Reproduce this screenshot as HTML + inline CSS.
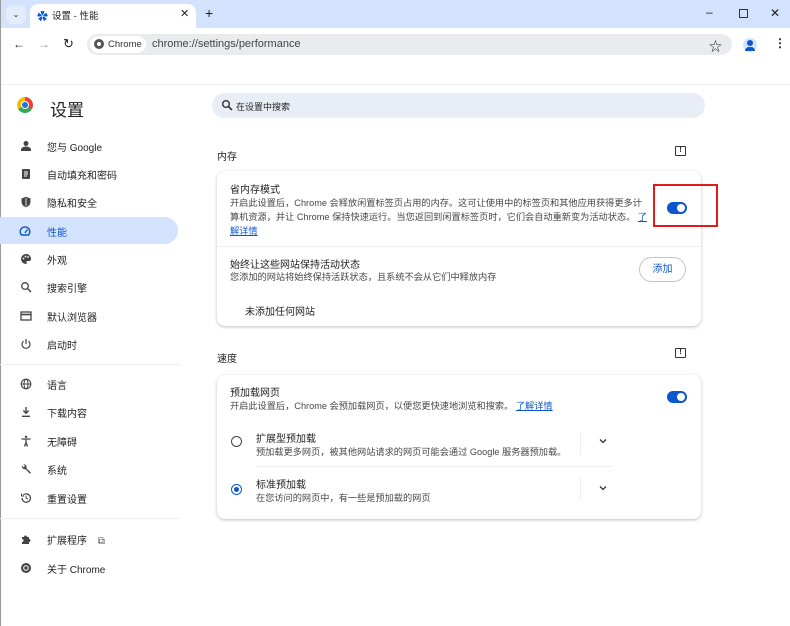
<!DOCTYPE html>
<html><head><meta charset="utf-8"><style>
*{margin:0;padding:0;box-sizing:border-box}
body{width:790px;height:626px;overflow:hidden;background:#fff;font-family:"Liberation Sans","Noto Sans CJK SC",sans-serif;color:#1f1f1f;position:relative;font-size:10px}
.a{position:absolute;white-space:nowrap}
.t{font-size:10px;color:#1f1f1f}
.d{font-size:9.2px;color:#474747}
.lnk{color:#0b57d0;text-decoration:underline}
.nav{font-size:10px;color:#1f1f1f}
.tog{position:absolute;width:20px;height:12px;border-radius:6px;background:#0b57d0}
.tog:after{content:"";position:absolute;right:2px;top:2px;width:8px;height:8px;border-radius:50%;background:#fff}
svg.i{position:absolute;width:12px;height:12px}
</style></head><body>
<div class="a" style="left:0;top:0;width:790px;height:28px;background:#d3e3fd"></div>
<div class="a" style="left:6px;top:5px;width:20px;height:19px;border-radius:6px;background:#e4ecfb;font-size:8px;text-align:center;line-height:19px">⌄</div>
<div class="a" style="left:30px;top:4px;width:166px;height:24px;background:#fff;border-radius:8px 8px 0 0"></div>
<div class="a" style="left:37px;top:8px;color:#0b57d0;font-size:11px">✿</div>
<div class="a" style="left:52px;top:8px;font-size:9.5px">设置 - 性能</div>
<div class="a" style="left:180px;top:7px;font-size:11px">✕</div>
<div class="a" style="left:205px;top:5px;font-size:14px">+</div>
<div class="a" style="left:706px;top:5px;font-size:12px">–</div>
<div class="a" style="left:739px;top:9px;width:9px;height:9px;border:1.3px solid #333"></div>
<div class="a" style="left:770px;top:6px;font-size:12px">✕</div>
<div class="a" style="left:13px;top:37px;font-size:12px">←</div>
<div class="a" style="left:38px;top:37px;font-size:12px;color:#999">→</div>
<div class="a" style="left:63px;top:36px;font-size:13px">↻</div>
<div class="a" style="left:87px;top:34px;width:645px;height:21px;border-radius:11px;background:#e9ebee"></div>
<div class="a" style="left:90px;top:36px;width:56px;height:17px;border-radius:9px;background:#fff"></div>
<div class="a" style="left:94px;top:39px;width:10px;height:10px;border-radius:50%;border:3px solid #555"></div>
<div class="a" style="left:108px;top:39px;font-size:9.5px;color:#333">Chrome</div>
<div class="a" style="left:152px;top:38px;font-size:11px;color:#444">chrome://settings/performance</div>
<div class="a" style="left:709px;top:36px;font-size:13px">☆</div>
<div class="a" style="left:743px;top:38px;width:14px;height:14px;border-radius:50%;background:#d3e3fd"></div>
<div class="a" style="left:747px;top:40px;width:6px;height:6px;border-radius:50%;background:#0b57d0"></div>
<div class="a" style="left:745px;top:47px;width:10px;height:4px;border-radius:4px 4px 0 0;background:#0b57d0"></div>
<div class="a" style="left:774px;top:36px;font-size:12px;font-weight:bold">⋮</div>
<div class="a" style="left:0;top:84px;width:790px;height:1px;background:#eee"></div>
<div class="a" style="left:0;top:0;width:1px;height:626px;background:#999"></div>
<div class="a" style="left:17px;top:97px;width:16px;height:16px;border-radius:50%;background:conic-gradient(#ea4335 0 120deg,#34a853 120deg 240deg,#fbbc04 240deg)"></div>
<div class="a" style="left:21px;top:101px;width:8px;height:8px;border-radius:50%;background:#1a73e8;border:1.5px solid #fff"></div>
<div class="a" style="left:50px;top:96px;font-size:17px">设置</div>
<div class="a" style="left:212px;top:93px;width:493px;height:25px;border-radius:13px;background:#e9eef6"></div>
<svg class="i" style="left:221px;top:99px" viewBox="0 0 12 12"><circle cx="5" cy="5" r="3.3" fill="none" stroke="#333" stroke-width="1.4"/><path d="M7.5 7.5L11 11" stroke="#333" stroke-width="1.6"/></svg>
<div class="a" style="left:236px;top:100px;font-size:9px">在设置中搜索</div>
<div class="a" style="left:0;top:217px;width:178px;height:27px;border-radius:0 14px 14px 0;background:#d3e3fd"></div>
<div class="a nav" style="left:47px;top:139px">您与 Google</div>
<div class="a nav" style="left:47px;top:167px">自动填充和密码</div>
<div class="a nav" style="left:47px;top:195px">隐私和安全</div>
<div class="a nav" style="left:47px;top:224px;color:#0b57d0">性能</div>
<div class="a nav" style="left:47px;top:252px">外观</div>
<div class="a nav" style="left:47px;top:280px">搜索引擎</div>
<div class="a nav" style="left:47px;top:309px">默认浏览器</div>
<div class="a nav" style="left:47px;top:337px">启动时</div>
<div class="a" style="left:0;top:364px;width:180px;height:1px;background:#eee"></div>
<div class="a nav" style="left:47px;top:377px">语言</div>
<div class="a nav" style="left:47px;top:405px">下载内容</div>
<div class="a nav" style="left:47px;top:434px">无障碍</div>
<div class="a nav" style="left:47px;top:462px">系统</div>
<div class="a nav" style="left:47px;top:491px">重置设置</div>
<div class="a" style="left:0;top:518px;width:180px;height:1px;background:#eee"></div>
<div class="a nav" style="left:47px;top:532px">扩展程序 <span style="margin-left:8px;color:#555">⧉</span></div>
<div class="a nav" style="left:47px;top:561px">关于 Chrome</div>
<svg class="i" style="left:20px;top:140px" viewBox="0 0 12 12"><circle cx="6" cy="3.5" r="2.5" fill="#444"/><path d="M1 11v-1.5c0-2 3-3 5-3s5 1 5 3V11z" fill="#444"/></svg>
<svg class="i" style="left:20px;top:168px" viewBox="0 0 12 12"><rect x="2" y="1" width="8" height="10" rx="1" fill="#444"/><path d="M4 4h4M4 6h4M4 8h3" stroke="#fff"/></svg>
<svg class="i" style="left:20px;top:196px" viewBox="0 0 12 12"><path d="M6 .8L10.5 2.5v3c0 3-2 5-4.5 5.8C3.5 10.5 1.5 8.5 1.5 5.5v-3z" fill="#444"/><path d="M6 2v8.5" stroke="#fff" stroke-width=".8"/></svg>
<svg class="i" style="left:19px;top:225px" viewBox="0 0 12 12"><path d="M2.5 10A4.8 4.8 0 1 1 9.5 10z" fill="none" stroke="#0b57d0" stroke-width="1.4"/><path d="M6 8l2.5-3.5" stroke="#0b57d0" stroke-width="1.4"/></svg>
<svg class="i" style="left:20px;top:253px" viewBox="0 0 12 12"><path d="M6 1a5 5 0 0 0 0 10c1 0 1-1 .6-1.6-.4-.6 0-1.4.8-1.4H9a2 2 0 0 0 2-2C11 3 8.8 1 6 1z" fill="#444"/><circle cx="3.5" cy="5.5" r=".9" fill="#fff"/><circle cx="5.5" cy="3.5" r=".9" fill="#fff"/><circle cx="8" cy="4" r=".9" fill="#fff"/></svg>
<svg class="i" style="left:20px;top:281px" viewBox="0 0 12 12"><circle cx="5" cy="5" r="3.3" fill="none" stroke="#444" stroke-width="1.3"/><path d="M7.5 7.5L11 11" stroke="#444" stroke-width="1.5"/></svg>
<svg class="i" style="left:20px;top:310px" viewBox="0 0 12 12"><rect x="1" y="2" width="10" height="8" fill="none" stroke="#444" stroke-width="1.3"/><path d="M1 4.5h10" stroke="#444" stroke-width="1.6"/></svg>
<svg class="i" style="left:20px;top:338px" viewBox="0 0 12 12"><path d="M3.5 3.2A4 4 0 1 0 8.5 3.2" fill="none" stroke="#444" stroke-width="1.2"/><path d="M6 1v5" stroke="#444" stroke-width="1.2"/></svg>
<svg class="i" style="left:20px;top:378px" viewBox="0 0 12 12"><circle cx="6" cy="6" r="4.8" fill="none" stroke="#444" stroke-width="1.1"/><ellipse cx="6" cy="6" rx="2" ry="4.8" fill="none" stroke="#444"/><path d="M1.2 6h9.6" stroke="#444"/></svg>
<svg class="i" style="left:20px;top:406px" viewBox="0 0 12 12"><path d="M6 1v6M3.3 4.5L6 7.3 8.7 4.5" fill="none" stroke="#444" stroke-width="1.4"/><path d="M2 10.3h8" stroke="#444" stroke-width="1.4"/></svg>
<svg class="i" style="left:20px;top:435px" viewBox="0 0 12 12"><circle cx="6" cy="1.8" r="1.2" fill="#444"/><path d="M1.5 4h9M6 4v3.5M6 7.5L4.5 11.5M6 7.5l1.5 4" stroke="#444" stroke-width="1.3" fill="none"/></svg>
<svg class="i" style="left:20px;top:463px" viewBox="0 0 12 12"><path d="M2 2.5a2.8 2.8 0 0 0 3.5 3.6l4.5 4.6 1-1-4.6-4.5A2.8 2.8 0 0 0 3.4 1.3L5 3 3.5 4.5z" fill="#444"/></svg>
<svg class="i" style="left:20px;top:492px" viewBox="0 0 12 12"><path d="M2 6a4.2 4.2 0 1 0 1.3-3" fill="none" stroke="#444" stroke-width="1.2"/><path d="M1.5 1.5v2.5h2.5" fill="none" stroke="#444" stroke-width="1.1"/><path d="M6 3.5V6l1.8 1.2" fill="none" stroke="#444"/></svg>
<svg class="i" style="left:20px;top:533px" viewBox="0 0 12 12"><path d="M2 4h2a1.5 1.5 0 1 1 3 0h2v2a1.5 1.5 0 1 1 0 3v2H2V9a1.5 1.5 0 1 0 0-3z" fill="#444"/></svg>
<svg class="i" style="left:20px;top:562px" viewBox="0 0 12 12"><circle cx="6" cy="6" r="5" fill="#444"/><circle cx="6" cy="6" r="2.8" fill="#fff"/><circle cx="6" cy="6" r="1.8" fill="#444"/></svg>
<div class="a t" style="left:217px;top:148px">内存</div>
<div class="a" style="left:675px;top:146px;width:11px;height:10px;border:1.5px solid #333;border-radius:1px;font-size:7px;line-height:7px;text-align:center;font-weight:bold">!</div>
<div class="a" style="left:217px;top:171px;width:484px;height:155px;border-radius:8px;background:#fff;box-shadow:0 1px 3px rgba(0,0,0,.25)"></div>
<div class="a t" style="left:230px;top:181px">省内存模式</div>
<div class="a d" style="left:230px;top:195px">开启此设置后，Chrome 会释放闲置标签页占用的内存。这可让使用中的标签页和其他应用获得更多计</div>
<div class="a d" style="left:230px;top:209px">算机资源，并让 Chrome 保持快速运行。当您返回到闲置标签页时，它们会自动重新变为活动状态。 <span class="lnk">了</span></div>
<div class="a d" style="left:230px;top:223px"><span class="lnk">解详情</span></div>
<div class="tog" style="left:667px;top:202px"></div>
<div class="a" style="left:653px;top:184px;width:65px;height:43px;border:2px solid #e01b1b"></div>
<div class="a" style="left:217px;top:246px;width:484px;height:1px;background:#eee"></div>
<div class="a t" style="left:230px;top:256px">始终让这些网站保持活动状态</div>
<div class="a d" style="left:230px;top:269px">您添加的网站将始终保持活跃状态，且系统不会从它们中释放内存</div>
<div class="a" style="left:639px;top:257px;width:47px;height:25px;border:1px solid #c4c7c5;border-radius:13px;color:#0b57d0;font-size:10px;text-align:center;line-height:23px">添加</div>
<div class="a t" style="left:245px;top:303px">未添加任何网站</div>
<div class="a t" style="left:217px;top:350px">速度</div>
<div class="a" style="left:675px;top:348px;width:11px;height:10px;border:1.5px solid #333;border-radius:1px;font-size:7px;line-height:7px;text-align:center;font-weight:bold">!</div>
<div class="a" style="left:217px;top:375px;width:484px;height:144px;border-radius:8px;background:#fff;box-shadow:0 1px 3px rgba(0,0,0,.25)"></div>
<div class="a t" style="left:230px;top:384px">预加载网页</div>
<div class="a d" style="left:230px;top:398px">开启此设置后，Chrome 会预加载网页，以便您更快速地浏览和搜索。 <span class="lnk">了解详情</span></div>
<div class="tog" style="left:667px;top:391px"></div>
<div class="a" style="left:231px;top:436px;width:11px;height:11px;border-radius:50%;border:1.5px solid #444"></div>
<div class="a t" style="left:256px;top:430px">扩展型预加载</div>
<div class="a d" style="left:256px;top:444px">预加载更多网页，被其他网站请求的网页可能会通过 Google 服务器预加载。</div>
<div class="a" style="left:580px;top:432px;width:1px;height:22px;background:#eee"></div>
<svg class="i" style="left:598px;top:436px;width:10px;height:10px" viewBox="0 0 10 10"><path d="M2 3.5l3 3 3-3" fill="none" stroke="#333" stroke-width="1.3"/></svg>
<div class="a" style="left:256px;top:466px;width:356px;height:1px;background:#eee"></div>
<div class="a" style="left:231px;top:484px;width:11px;height:11px;border-radius:50%;border:1.5px solid #0b57d0"></div>
<div class="a" style="left:234px;top:487px;width:5px;height:5px;border-radius:50%;background:#0b57d0"></div>
<div class="a t" style="left:256px;top:476px">标准预加载</div>
<div class="a d" style="left:256px;top:490px">在您访问的网页中，有一些是预加载的网页</div>
<div class="a" style="left:580px;top:478px;width:1px;height:22px;background:#eee"></div>
<svg class="i" style="left:598px;top:483px;width:10px;height:10px" viewBox="0 0 10 10"><path d="M2 3.5l3 3 3-3" fill="none" stroke="#333" stroke-width="1.3"/></svg>
</body></html>
